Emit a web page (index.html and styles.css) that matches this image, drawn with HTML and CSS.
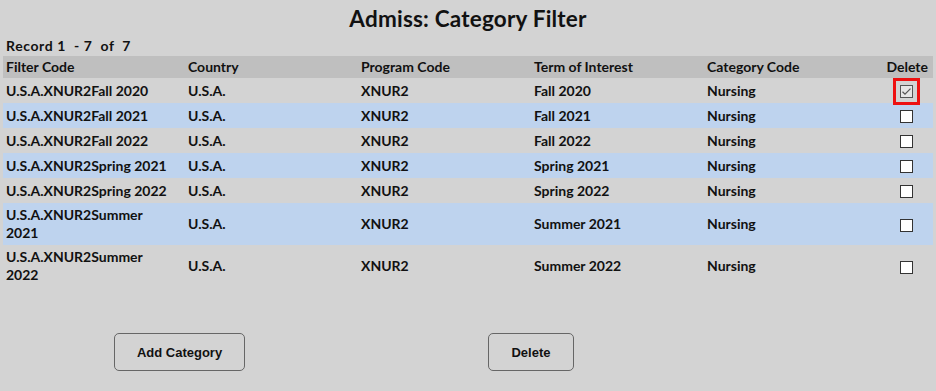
FILE: index.html
```
<!DOCTYPE html>
<html lang="en">
<head>
  <meta charset="UTF-8" />
  <title>Admiss: Category Filter</title>
  <link rel="stylesheet" href="styles.css">
</head>
<body>
  <div class="page">
    <h1 class="title">Admiss: Category Filter</h1>
    <div class="record-count">Record 1&nbsp; - 7&nbsp; of&nbsp; 7</div>

    <table class="filter-table">
      <thead>
        <tr>
          <th class="col-filter">Filter Code</th>
          <th class="col-mid">Country</th>
          <th class="col-mid">Program Code</th>
          <th class="col-mid">Term of Interest</th>
          <th class="col-mid">Category Code</th>
          <th class="col-del">Delete</th>
        </tr>
      </thead>
      <tbody>
        <tr>
          <td>U.S.A.XNUR2Fall 2020</td>
          <td>U.S.A.</td>
          <td>XNUR2</td>
          <td>Fall 2020</td>
          <td>Nursing</td>
          <td class="cell-del"><span class="box checked marked"><svg viewBox="0 0 13 13" width="13" height="13"><path d="M2.5 6.8 L5 9.2 L10.5 3.6" fill="none" stroke="#555" stroke-width="1.2"/></svg></span></td>
        </tr>
        <tr class="alt">
          <td>U.S.A.XNUR2Fall 2021</td>
          <td>U.S.A.</td>
          <td>XNUR2</td>
          <td>Fall 2021</td>
          <td>Nursing</td>
          <td class="cell-del"><span class="box"></span></td>
        </tr>
        <tr>
          <td>U.S.A.XNUR2Fall 2022</td>
          <td>U.S.A.</td>
          <td>XNUR2</td>
          <td>Fall 2022</td>
          <td>Nursing</td>
          <td class="cell-del"><span class="box"></span></td>
        </tr>
        <tr class="alt">
          <td>U.S.A.XNUR2Spring 2021</td>
          <td>U.S.A.</td>
          <td>XNUR2</td>
          <td>Spring 2021</td>
          <td>Nursing</td>
          <td class="cell-del"><span class="box"></span></td>
        </tr>
        <tr>
          <td>U.S.A.XNUR2Spring 2022</td>
          <td>U.S.A.</td>
          <td>XNUR2</td>
          <td>Spring 2022</td>
          <td>Nursing</td>
          <td class="cell-del"><span class="box"></span></td>
        </tr>
        <tr class="alt">
          <td>U.S.A.XNUR2Summer<br>2021</td>
          <td>U.S.A.</td>
          <td>XNUR2</td>
          <td>Summer 2021</td>
          <td>Nursing</td>
          <td class="cell-del"><span class="box"></span></td>
        </tr>
        <tr>
          <td>U.S.A.XNUR2Summer<br>2022</td>
          <td>U.S.A.</td>
          <td>XNUR2</td>
          <td>Summer 2022</td>
          <td>Nursing</td>
          <td class="cell-del"><span class="box"></span></td>
        </tr>
      </tbody>
    </table>

    <div class="actions">
      <button class="btn btn-add">Add Category</button>
      <button class="btn btn-delete">Delete</button>
    </div>
  </div>
</body>
</html>
```

FILE: styles.css
```
body {
  margin: 0;
  background: #d3d3d3;
  font-family: 'Lato', 'DejaVu Sans', sans-serif;
  color: #111;
}

.page {
  padding: 0 3px;
}

.title {
  margin: 0;
  padding-top: 5px;
  height: 32px;
  text-align: center;
  font-size: 22.5px;
  font-weight: bold;
  letter-spacing: 0.2px;
}

.record-count {
  padding-left: 3px;
  height: 19px;
  line-height: 17px;
  font-size: 14px;
  font-weight: bold;
  letter-spacing: 0.6px;
}

.filter-table {
  width: 930px;
  border-collapse: collapse;
  table-layout: fixed;
  font-size: 14px;
  font-weight: bold;
}

.filter-table th,
.filter-table td {
  text-align: left;
  padding: 3px 3px;
  line-height: 18px;
  vertical-align: middle;
}

.filter-table thead tr {
  background: #bfbfbf;
  height: 22px;
}

.filter-table th {
  font-weight: bold;
  padding: 2px 3px;
  line-height: 18px;
}

.col-filter {
  width: 176px;
}

.col-mid {
  width: 167px;
}

.filter-table th.col-del {
  text-align: right;
  padding-right: 5px;
}

.filter-table tbody tr {
  height: 25px;
}

.filter-table tr.alt {
  background: #bed3ee;
}

.cell-del {
  text-align: center !important;
  padding-left: 6px !important;
}

.box {
  display: inline-block;
  width: 11px;
  height: 11px;
  border: 1px solid #333;
  background: #fff;
  vertical-align: middle;
  position: relative;
}

.box.checked {
  background: #e6e6e6;
  border-color: #555;
}

.box svg {
  position: absolute;
  left: -1px;
  top: -1px;
}

.box.marked {
  outline: 3px solid #ee1111;
  outline-offset: 4px;
}

.actions {
  display: flex;
  margin-top: 46px;
  padding-left: 111px;
}

.btn {
  height: 38px;
  background: #d3d3d3;
  border: 1px solid #666;
  border-radius: 5px;
  font-family: 'Liberation Sans', Arial, sans-serif;
  font-size: 13px;
  font-weight: bold;
  color: #111;
  cursor: pointer;
}

.btn-add {
  width: 131px;
}

.btn-delete {
  width: 86px;
  margin-left: 243px;
}
```
